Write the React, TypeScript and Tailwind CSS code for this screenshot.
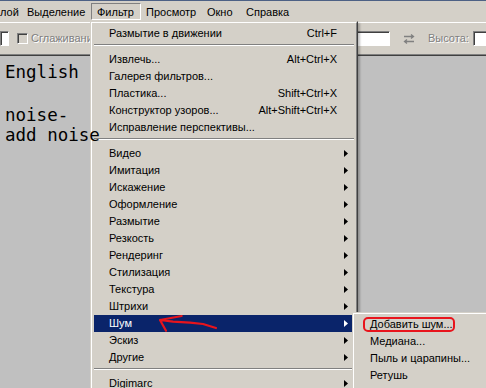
import React from "react"

type Item = { label: string; shortcut?: string; sub?: boolean; active?: boolean } | "sep"

const filterMenu: Item[] = [
  { label: "Размытие в движении", shortcut: "Ctrl+F" },
  "sep",
  { label: "Извлечь...", shortcut: "Alt+Ctrl+X" },
  { label: "Галерея фильтров..." },
  { label: "Пластика...", shortcut: "Shift+Ctrl+X" },
  { label: "Конструктор узоров...", shortcut: "Alt+Shift+Ctrl+X" },
  { label: "Исправление перспективы..." },
  "sep",
  { label: "Видео", sub: true },
  { label: "Имитация", sub: true },
  { label: "Искажение", sub: true },
  { label: "Оформление", sub: true },
  { label: "Размытие", sub: true },
  { label: "Резкость", sub: true },
  { label: "Рендеринг", sub: true },
  { label: "Стилизация", sub: true },
  { label: "Текстура", sub: true },
  { label: "Штрихи", sub: true },
  { label: "Шум", sub: true, active: true },
  { label: "Эскиз", sub: true },
  { label: "Другие", sub: true },
  "sep",
  { label: "Digimarc", sub: true },
]

const noiseMenu = ["Добавить шум...", "Медиана...", "Пыль и царапины...", "Ретушь", "Уменьшить шум..."]

function Arrow({ white }: { white?: boolean }) {
  return (
    <svg width="4" height="7" viewBox="0 0 4 7" className="shrink-0">
      <path d="M0 0L4 3.5L0 7z" fill={white ? "#fff" : "#000"} />
    </svg>
  )
}

function MenuRow({ item }: { item: Item }) {
  if (item === "sep") {
    return (
      <div className="h-[9px] pt-[2px]">
        <div className="border-t border-[#808080] border-b border-b-white" />
      </div>
    )
  }
  return (
    <div
      className={`flex items-center h-[17px] leading-[17px] pl-[15px] pr-[6px] whitespace-nowrap ${
        item.active ? "bg-[#0a246a] text-white" : ""
      }`}
    >
      <span className="flex-1">{item.label}</span>
      {item.shortcut && <span className="mr-[11px]">{item.shortcut}</span>}
      {item.sub && <Arrow white={item.active} />}
    </div>
  )
}

function Field({ className }: { className: string }) {
  return (
    <div
      className={`h-[15px] bg-white border-t border-l border-[#808080] border-r border-b border-r-white border-b-white shadow-[inset_1px_1px_0_#404040] ${className}`}
    />
  )
}

export default function App() {
  return (
    <div className="relative w-[486px] h-[388px] overflow-hidden bg-[#d4d0c8] text-black text-[11px] font-['Liberation_Sans',Arial,sans-serif]">
      <div className="h-px bg-[#4d6185]" />

      {/* menu bar */}
      <div className="flex items-center h-[21px]">
        <span className="w-[21px] leading-[19px] h-[17px]">лой</span>
        <span className="w-[70px] pl-[6px] leading-[19px] h-[17px]">Выделение</span>
        <span className="w-[50px] pl-[5px] leading-[17px] h-[17px] border-t border-l border-[#808080] border-r border-b border-r-white border-b-white">
          Фильтр
        </span>
        <span className="w-[60px] pl-[5px] leading-[19px] h-[17px]">Просмотр</span>
        <span className="w-[39px] pl-[6px] leading-[19px] h-[17px]">Окно</span>
        <span className="pl-[6px] leading-[19px] h-[17px]">Справка</span>
      </div>

      {/* options bar */}
      <div className="flex items-center h-[33px] border-t border-white border-b border-b-[#808080]">
        <div className="flex items-center w-[339px] shrink-0">
          <Field className="w-[9px]" />
          <div className="ml-[8px] w-[11px] h-[11px] border-t border-l border-[#808080] border-r border-b border-r-white border-b-white shadow-[inset_1px_1px_0_#404040]" />
          <span className="ml-[3px] text-[#808080] [text-shadow:1px_1px_0_#fff]">Сглаживание</span>
        </div>
        <Field className="w-[51px] shrink-0" />
        <svg width="12" height="10" viewBox="0 0 12 10" className="ml-[13px] shrink-0">
          <path d="M1 2.5H10M8 0.5L10.5 2.5L8 4.5" stroke="#808080" strokeWidth="1.3" fill="none" />
          <path d="M11 7.5H2M4 5.5L1.5 7.5L4 9.5" stroke="#808080" strokeWidth="1.3" fill="none" />
        </svg>
        <span className="ml-[13px] shrink-0 text-[#808080] [text-shadow:1px_1px_0_#fff]">Высота:</span>
        <Field className="ml-[4px] w-[30px] shrink-0" />
      </div>

      {/* canvas */}
      <div className="h-[333px] bg-[#c0c0c0] border-t border-[#404040] pl-[5px] pt-[6px]">
        <div className="relative z-10 font-['DejaVu_Sans_Mono',monospace] text-[17.5px] leading-[20px]">
          <div>English</div>
          <div className="mt-[23px]">noise-</div>
          <div>add noise</div>
        </div>
      </div>

      {/* Фильтр dropdown */}
      <div className="absolute left-[90px] top-[21px] w-[268px] bg-[#d4d0c8] border border-t-[#d4d0c8] border-l-[#d4d0c8] border-r-[#404040] border-b-[#404040] shadow-[2px_2px_2px_rgba(0,0,0,0.25)]">
        <div className="border border-t-white border-l-white border-r-[#808080] border-b-[#808080] p-[2px]">
          {filterMenu.map((item, i) => (
            <MenuRow key={i} item={item} />
          ))}
        </div>
      </div>

      {/* Шум submenu */}
      <div className="absolute left-[352px] top-[312px] w-[170px] bg-[#d4d0c8] border border-t-[#d4d0c8] border-l-[#d4d0c8] border-r-[#404040] border-b-[#404040]">
        <div className="border border-t-white border-l-white border-r-[#808080] border-b-[#808080] p-[2px]">
          {noiseMenu.map((label) => (
            <div key={label} className="h-[17px] leading-[17px] pl-[14px] whitespace-nowrap">
              {label}
            </div>
          ))}
        </div>
      </div>

      {/* red marks */}
      <div className="absolute left-[363px] top-[317px] w-[92px] h-[15px] border-2 border-[#e8141c] rounded-[5px]" />
      <svg className="absolute left-[155px] top-[312px]" width="66" height="22" viewBox="0 0 66 22">
        <path
          d="M5 8L18 9.7L35 10.7L48 12L61 16M5 8L26.7 4M5 8L11 18.7"
          stroke="#e8141c"
          strokeWidth="2.2"
          strokeLinecap="round"
          strokeLinejoin="round"
          fill="none"
        />
      </svg>
    </div>
  )
}
